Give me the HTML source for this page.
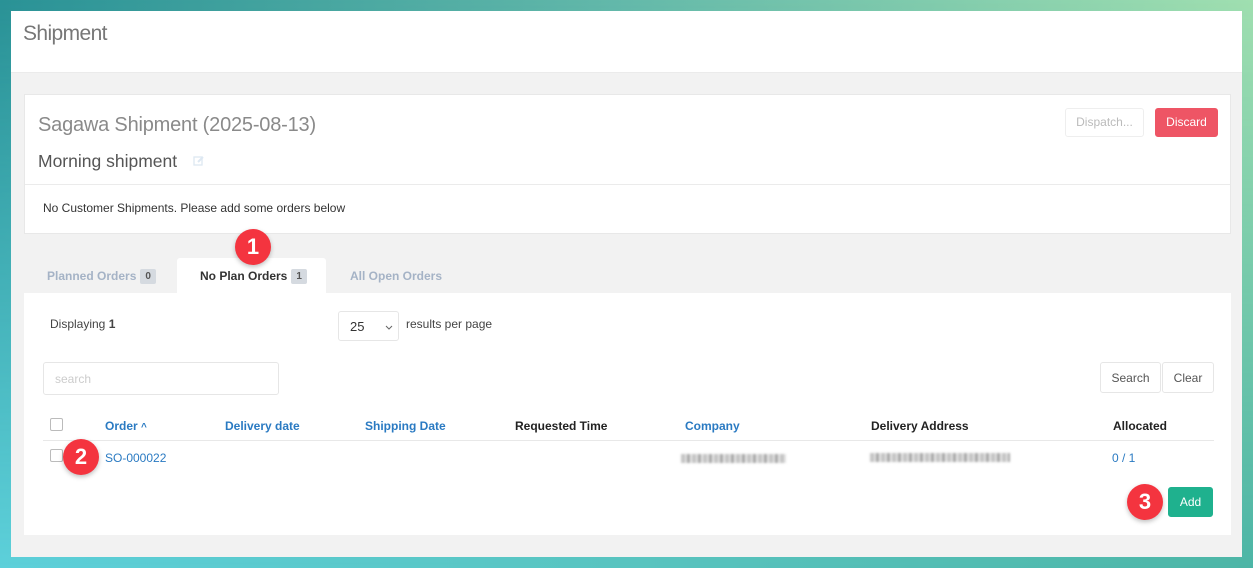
<!DOCTYPE html>
<html><head><meta charset="utf-8"><style>
*{box-sizing:border-box;margin:0;padding:0}
body{width:1253px;height:568px;overflow:hidden;position:relative;font-family:"Liberation Sans",Arial,sans-serif;
background:linear-gradient(90deg,rgba(42,146,150,1) 0%,rgba(100,185,170,1) 50%,rgba(160,223,176,1) 100%);}
.bg2{position:absolute;inset:0;background:linear-gradient(90deg,#5dd0da 0%,#58c4c0 50%,#4cb5a6 100%);-webkit-mask:linear-gradient(180deg,transparent 0%,#000 100%);mask:linear-gradient(180deg,transparent 0%,#000 100%)}
.a{position:absolute}
.frame{left:11px;top:11px;width:1231px;height:546px;background:#f2f2f2}
.hdr{left:11px;top:11px;width:1231px;height:62px;background:#fff;border-bottom:1px solid #ebebeb}
.card{left:24px;top:94px;width:1207px;height:140px;background:#fff;border:1px solid #e8e8e8}
.panel{left:24px;top:293px;width:1207px;height:242px;background:#fff}
.btn{position:absolute;border:1px solid #e6e6e6;border-radius:3px;font-size:12px;text-align:center;background:#fff;color:#555}
.th{position:absolute;top:419px;font-size:12px;font-weight:bold;color:#222}
.bl{color:#2a7ac2}
.cb{position:absolute;width:13px;height:13px;border:1px solid #bbb;border-radius:2px;background:#fff}
.badge{position:absolute;width:36px;height:36px;border-radius:50%;background:#f4343f;color:#fff;font-weight:bold;font-size:22px;text-align:center;line-height:36px;box-shadow:0 2px 5px rgba(0,0,0,.25)}
.blur{position:absolute;height:9px;background:repeating-linear-gradient(90deg,#bbb 0 4px,#ddd 4px 6px,#999 6px 9px,#e6e6e6 9px 11px);filter:blur(1px);opacity:.85}
.cnt{display:inline-block;background:#d5dae0;color:#555;font-size:10px;padding:2px 5px;border-radius:2px;margin-left:4px;vertical-align:1px}
</style></head><body>
<div class="bg2"></div>
<div class="a frame"></div>
<div class="a hdr"></div>
<div class="a" style="left:23px;top:22px;font-size:21px;color:#777;letter-spacing:-0.6px">Shipment</div>
<div class="a card"></div>
<div class="a" style="left:38px;top:114px;font-size:20px;color:#8a8a8a;letter-spacing:-0.2px">Sagawa Shipment (2025-08-13)</div>
<div class="a" style="left:38px;top:151px;font-size:17.5px;color:#555">Morning shipment</div>
<svg class="a" style="left:193px;top:155px" width="12" height="12" viewBox="0 0 12 12"><rect x="1" y="2" width="8" height="8" fill="none" stroke="#dde8f2" stroke-width="1.3"/><path d="M5 7 L10 2" stroke="#dde8f2" stroke-width="2"/></svg>
<div class="btn" style="left:1065px;top:108px;width:79px;height:29px;line-height:27px;color:#bbb;border-color:#eee">Dispatch...</div>
<div class="btn" style="left:1155px;top:108px;width:63px;height:29px;line-height:27px;background:#ee5565;border-color:#ee5565;color:#fff">Discard</div>
<div class="a" style="left:25px;top:184px;width:1205px;height:1px;background:#ebebeb"></div>
<div class="a" style="left:43px;top:201px;font-size:12px;color:#333">No Customer Shipments. Please add some orders below</div>
<div class="a" style="left:47px;top:269px;font-size:12px;font-weight:bold;color:#a5b3c6">Planned Orders<span class="cnt">0</span></div>
<div class="a" style="left:177px;top:258px;width:149px;height:36px;background:#fff;border-radius:3px 3px 0 0"></div>
<div class="a" style="left:200px;top:269px;font-size:12px;font-weight:bold;color:#333">No Plan Orders<span class="cnt">1</span></div>
<div class="a" style="left:350px;top:269px;font-size:12px;font-weight:bold;color:#a5b3c6">All Open Orders</div>
<div class="a panel"></div>
<div class="a" style="left:50px;top:317px;font-size:12px;color:#444">Displaying <b>1</b></div>
<div class="btn" style="left:338px;top:311px;width:61px;height:30px;text-align:left;padding-left:11px;line-height:30px;font-size:13px;color:#333">25<svg style="position:absolute;left:46px;top:13px" width="8" height="5" viewBox="0 0 8 5"><path d="M1 1 L4 4 L7 1" fill="none" stroke="#666" stroke-width="1"/></svg></div>
<div class="a" style="left:406px;top:317px;font-size:12px;color:#444">results per page</div>
<div class="btn" style="left:43px;top:362px;width:236px;height:33px;text-align:left;padding-left:11px;line-height:33px;color:#ccc">search</div>
<div class="btn" style="left:1100px;top:362px;width:61px;height:31px;line-height:30px">Search</div>
<div class="btn" style="left:1162px;top:362px;width:52px;height:31px;line-height:30px">Clear</div>
<div class="cb" style="left:50px;top:418px"></div>
<div class="th bl" style="left:105px">Order <span style="font-size:10px">&#94;</span></div>
<div class="th bl" style="left:225px">Delivery date</div>
<div class="th bl" style="left:365px">Shipping Date</div>
<div class="th" style="left:515px">Requested Time</div>
<div class="th bl" style="left:685px">Company</div>
<div class="th" style="left:871px">Delivery Address</div>
<div class="th" style="left:1113px">Allocated</div>
<div class="a" style="left:43px;top:440px;width:1171px;height:1px;background:#e8e8e8"></div>
<div class="cb" style="left:50px;top:449px"></div>
<div class="a bl" style="left:105px;top:451px;font-size:12px">SO-000022</div>
<div class="blur" style="left:681px;top:454px;width:105px"></div>
<div class="blur" style="left:870px;top:453px;width:140px"></div>
<div class="a bl" style="left:1112px;top:451px;font-size:12px">0 / 1</div>
<div class="btn" style="left:1168px;top:487px;width:45px;height:30px;line-height:29px;background:#1fb18e;border-color:#1fb18e;color:#fff">Add</div>
<div class="badge" style="left:235px;top:229px">1</div>
<div class="badge" style="left:63px;top:439px">2</div>
<div class="badge" style="left:1127px;top:484px">3</div>
</body></html>
